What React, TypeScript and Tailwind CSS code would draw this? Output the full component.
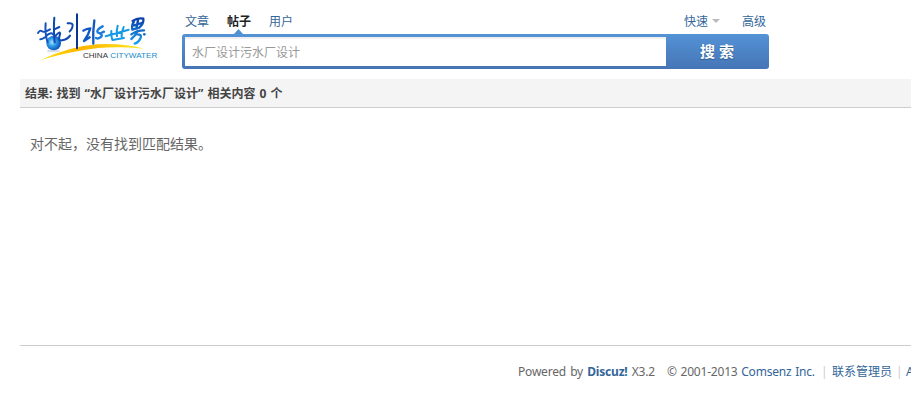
import type { ReactNode } from 'react'

type Tab = {
  label: string
  active?: boolean
}

const TABS: Tab[] = [{ label: '文章' }, { label: '帖子', active: true }, { label: '用户' }]

const KEYWORD = '水厂设计污水厂设计'

function Logo() {
  return (
    <svg className="block w-[125px] h-[50px]" viewBox="45 21 375 150" fill="none" strokeLinecap="round" strokeLinejoin="round">
      <defs>
        <linearGradient id="ink" x1="0" y1="0" x2="0" y2="1">
          <stop offset="0" stopColor="#0b3fa8" />
          <stop offset="1" stopColor="#1ba0ee" />
        </linearGradient>
        <radialGradient id="drop" cx="0.4" cy="0.45" r="0.6">
          <stop offset="0" stopColor="#a5e4ff" />
          <stop offset="0.45" stopColor="#2f9ce8" />
          <stop offset="1" stopColor="#0a4fb4" />
        </radialGradient>
        <linearGradient id="swoosh" x1="0" y1="0" x2="1" y2="0">
          <stop offset="0" stopColor="#ffe000" />
          <stop offset="0.4" stopColor="#ffb400" />
          <stop offset="1" stopColor="#ffea20" />
        </linearGradient>
      </defs>
      <ellipse cx="100" cy="138" rx="20" ry="4" fill="#d5dde6" />
      <path d="M62 165Q150 124 230 118Q310 114 372 131Q300 124 235 129Q150 139 62 165Z" fill="url(#swoosh)" />
      <circle cx="101" cy="114" r="22" fill="url(#drop)" />
      <g stroke="#1554bd" strokeWidth="6">
        <path d="M54 84Q60 74 66 79T90 73M77 55Q74 85 83 112M61 103Q72 102 84 88M82 90Q96 80 99 88" />
        <path d="M103 38Q100 70 104 112M103 73L118 66M107 92Q122 76 120 88Q112 108 126 106Q142 104 150 92M143 55Q162 52 157 67Q155 75 149 79" stroke="#0e48b2" />
        <path d="M171 28L171 130" stroke="#083591" />
      </g>
      <g stroke="#1258c4" strokeWidth="7">
        <path d="M190 77Q200 70 211 70Q206 90 192 108L209 97" />
        <path d="M223 46Q218 80 220 116" />
        <path d="M248 64Q228 74 233 82Q250 88 244 95Q236 103 228 99M243 84L252 80" stroke="#1c7cdd" />
        <path d="M257 94L284 86L326 74M274 78Q272 90 277 105L312 99M293 62Q288 80 291 94M311 66Q304 84 305 96" stroke="#159ae5" strokeWidth="6" />
      </g>
      <path d="M338 48Q352 38 370 41Q372 56 358 68L337 74Q334 60 342 50M342 61L365 54M354 45L349 71M334 88Q350 76 372 76M353 78Q346 92 334 102M351 88Q366 88 362 98Q356 112 344 116" stroke="url(#ink)" strokeWidth="7" />
      <circle cx="373" cy="88" r="4" fill="#1269cf" />
      <text x="189" y="158" fontFamily="Liberation Sans" fontSize="20" textLength="75" lengthAdjust="spacingAndGlyphs" fill="#333">CHINA</text>
      <text x="271" y="158" fontFamily="Liberation Sans" fontSize="20" textLength="141" lengthAdjust="spacingAndGlyphs" fill="#168bc9">CITYWATER</text>
    </svg>
  )
}

function Link({ children }: { children: ReactNode }) {
  return <a href="#" className="shrink-0 text-[#336699]">{children}</a>
}

function SearchBox() {
  return (
    <div className="w-[587px] ml-[22px]">
      <div className="flex h-[34px] pt-[13px] px-[3px] leading-[18px]">
        <nav className="flex gap-[18px]">
          {TABS.map((tab) => (
            <a key={tab.label} href="#" className={tab.active ? 'relative h-[21px] font-bold text-[#222]' : 'text-[#336699]'}>
              {tab.label}
              {tab.active && (
                <svg className="absolute left-[7px] bottom-0 w-[9px] h-[5px]" viewBox="0 0 9 5">
                  <path d="M0 5L4.5 0L9 5Z" fill="#5090d0" />
                </svg>
              )}
            </a>
          ))}
        </nav>
        <div className="flex gap-[22px] ml-auto">
          <a href="#" className="flex gap-[4px] text-[#336699]">
            快速
            <svg className="w-[8px] h-[4px] mt-[6px]" viewBox="0 0 8 4">
              <path d="M0 0H8L4 4Z" fill="#bbb" />
            </svg>
          </a>
          <Link>高级</Link>
        </div>
      </div>
      <form className="flex h-[35px] p-[3px] pr-0 rounded-[3px] bg-linear-to-b from-[#5393d6] to-[#4675b6]" onSubmit={(e) => e.preventDefault()}>
        <input defaultValue={KEYWORD} className="w-[481px] h-[29px] px-[7px] bg-white text-[#999] outline-none shadow-[inset_0_2px_1px_#eee]" />
        <button className="flex-1 h-[29px] pb-[1px] pr-[1px] text-[15px] font-bold text-white [text-shadow:0_1px_1px_#2d5989]">搜 索</button>
      </form>
    </div>
  )
}

export default function App() {
  return (
    <div className="w-[911px] h-[418px] overflow-hidden bg-white pl-[20px] text-[12px] text-[#444] font-['Noto_Sans','Noto_Sans_CJK_SC',sans-serif]">
      <header className="flex h-[79px]">
        <div className="w-[140px] pt-[12px] pl-[15px]">
          <Logo />
        </div>
        <SearchBox />
      </header>
      <h2 className="h-[29px] pt-[1px] pl-[5px] leading-[28px] font-bold [word-spacing:1px] bg-[#f4f4f4] border-b border-[#cdcdcd]">
        结果: 找到 “{KEYWORD}” 相关内容 0 个
      </h2>
      <p className="h-[237px] pt-[26px] pl-[10px] text-[14px] leading-[20px] text-[#666]">对不起，没有找到匹配结果。</p>
      <footer className="flex border-t border-[#cdcdcd] pt-[17px] pl-[498px] leading-[18px] whitespace-nowrap text-[#666]">
        <span className="shrink-0 w-[149px] tracking-[-0.2px] [word-spacing:1.3px]">Powered by <b className="text-[#336699]">Discuz!</b> X3.2</span>
        <span className="shrink-0 w-[154px] tracking-[-0.2px] [word-spacing:0.8px]">© 2001-2013 <Link>Comsenz Inc.</Link></span>
        <span className="shrink-0 w-[11px] text-[#ccc]">|</span>
        <Link>联系管理员</Link>
        <span className="shrink-0 w-[10px] ml-[4px] text-[#ccc]">|</span>
        <Link>Archiver</Link>
      </footer>
    </div>
  )
}
